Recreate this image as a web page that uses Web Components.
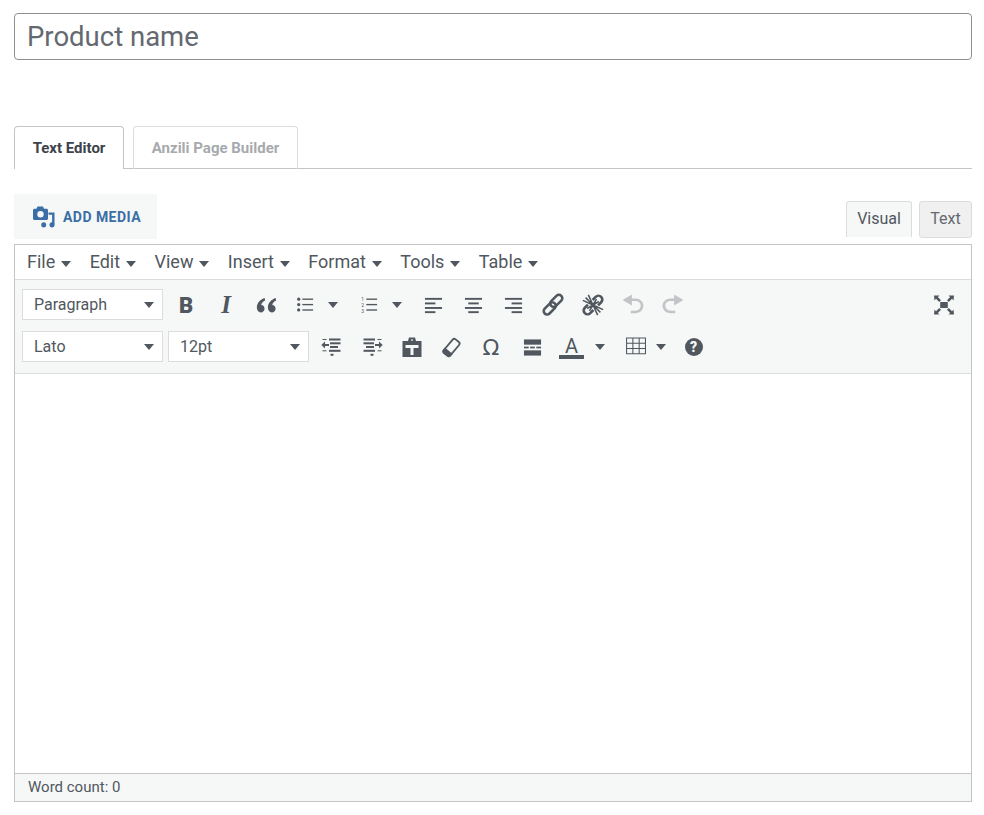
<!DOCTYPE html>
<html>
<head>
<meta charset="utf-8">
<style>
  html, body { margin: 0; background: #fff; }
  body { padding: 13px 12px 0 14px; font-family: Roboto, "Liberation Sans", sans-serif; color: #50575e; }
</style>
</head>
<body>
<product-title placeholder="Product name"></product-title>
<editor-tabs></editor-tabs>
<media-bar></media-bar>
<mce-editor></mce-editor>

<script>
const ICONS = {
  quote: '<path d="M8.400 3.500C4.800 4.700 1.600 7.600 1.600 11.800c0 2.600 1.500 4.200 3.400 4.200s3.300-1.400 3.300-3.200c0-1.900-1.300-3.100-2.900-3.200.3-1.700 1.500-3 3.400-3.900zM18 3.500c-3.600 1.200-6.800 4.100-6.800 8.300 0 2.600 1.500 4.200 3.400 4.200s3.300-1.400 3.300-3.200c0-1.900-1.300-3.100-2.900-3.200.3-1.700 1.500-3 3.400-3.900z"/>',
  bullist: '<circle cx="3" cy="3.500" r="1.800"/><circle cx="3" cy="9.500" r="1.800"/><circle cx="3" cy="15.500" r="1.800"/><rect x="7" y="2.800" width="12" height="1.500"/><rect x="7" y="8.800" width="12" height="1.500"/><rect x="7" y="14.800" width="12" height="1.500"/>',
  numlist: '<rect x="7" y="2.800" width="12" height="1.500"/><rect x="7" y="8.800" width="12" height="1.500"/><rect x="7" y="14.800" width="12" height="1.500"/><g font-family="Roboto" font-size="5.500"><text x="1.500" y="6">1</text><text x="1.500" y="12.500">2</text><text x="1.500" y="19">3</text></g>',
  alignleft: '<rect x="1" y="2" width="18" height="2"/><rect x="1" y="6.800" width="11" height="2"/><rect x="1" y="11.600" width="18" height="2"/><rect x="1" y="16" width="11" height="2"/>',
  aligncenter: '<rect x="1" y="2" width="18" height="2"/><rect x="4.500" y="6.800" width="11" height="2"/><rect x="1" y="11.600" width="18" height="2"/><rect x="4.500" y="16" width="11" height="2"/>',
  alignright: '<rect x="1" y="2" width="18" height="2"/><rect x="8" y="6.800" width="11" height="2"/><rect x="1" y="11.600" width="18" height="2"/><rect x="8" y="16" width="11" height="2"/>',
  link: '<g fill="none" stroke="currentColor" stroke-width="2.300"><rect x="10.200" y="-.6" width="6.200" height="13" rx="3.100" transform="rotate(45 13.300 5.900) translate(0 .5)"/><rect x="3.600" y="7" width="6.200" height="13" rx="3.100" transform="rotate(45 6.700 13.500) translate(0 -.5)"/></g>',
  unlink: '<g transform="rotate(45 10 10)" fill="none" stroke="currentColor"><path stroke-width="2.400" d="M6.500 7V3a3.500 3.500 0 0 1 7 0v4M6.500 13v4a3.500 3.500 0 0 0 7 0v-4"/><path stroke-width="1.400" d="M10 10L.5 6.500M10 10L.5 10M10 10L.5 13.500M10 10l9.500-3.500M10 10h9.500M10 10l9.500 3.500M10 10L8.500 4M10 10l1.500-6M10 10l-1.500 6M10 10l1.500 6"/></g>',
  undo: '<path d="M9 .5V4h3c4.500 0 7.500 3 7.500 6.500 0 4-3 7-7.500 7H8v-2.300h4c3 0 5-2 5-4.700 0-2.500-2-4.200-5-4.200H9v4.200L.5 5.500z"/>',
  redo: '<path transform="translate(20 0) scale(-1 1)" d="M9 .5V4h3c4.500 0 7.500 3 7.500 6.500 0 4-3 7-7.500 7H8v-2.300h4c3 0 5-2 5-4.700 0-2.500-2-4.200-5-4.200H9v4.200L.5 5.500z"/>',
  fullscreen: '<rect x="6.200" y="7" width="7.600" height="6"/><path d="M0 .5h5.500L3.900 2.100 7 5.200 5.200 7 2 3.800.5 5.500zM20 .5h-5.500l1.600 1.600L13 5.200 14.800 7 18 3.800l1.500 1.700zM0 19.500h5.500l-1.600-1.600L7 14.800 5.200 13 2 16.200.5 14.500zM20 19.500h-5.500l1.600-1.600-3.100-3.100 1.800-1.800 3.200 3.200 1.500-1.700z"/>',
  outdent: '<rect x="1.500" y="2" width="4" height="1"/><rect x="8" y="1.500" width="11.500" height="2"/><rect x="9" y="5.300" width="10.500" height="2"/><rect x="9" y="9" width="8" height="2"/><rect x="8" y="12.800" width="11.500" height="2"/><rect x="1.500" y="13.300" width="4" height="1"/><rect x="9.500" y="16.800" width="3" height="2"/><rect x="3.500" y="7" width="4.500" height="2"/><path d="M4 4.500L.3 8 4 11.500z"/>',
  indent: '<g transform="translate(20 0) scale(-1 1)"><rect x="1.500" y="2" width="4" height="1"/><rect x="8" y="1.500" width="11.500" height="2"/><rect x="9" y="5.300" width="10.500" height="2"/><rect x="9" y="9" width="8" height="2"/><rect x="8" y="12.800" width="11.500" height="2"/><rect x="1.500" y="13.300" width="4" height="1"/><rect x="9.500" y="16.800" width="3" height="2"/><rect x="3.500" y="7" width="4.500" height="2"/><path d="M4 4.500L.3 8 4 11.500z"/></g>',
  paste: '<path fill-rule="evenodd" d="M.5 4H6L7 .5h6L14 4h5.500v16H.5zM9.200 2.300v1.400h1.600V2.300zM3.500 8v3h5v7h3v-7h5V8z"/>',
  eraser: '<g transform="rotate(40 10 10)"><rect x="6" y="1.500" width="8" height="17" rx="2" fill="none" stroke="currentColor" stroke-width="1.700"/><path d="M5.200 14h9.600v2.500c0 1.700-1 2.800-2.800 2.800H8c-1.800 0-2.800-1.100-2.800-2.800z"/></g>',
  hr: '<rect x="1" y="1.500" width="18" height="5.500"/><rect x="1" y="13" width="18" height="5.500"/><rect x="1" y="9.100" width="5" height="1.800"/><rect x="7.500" y="9.100" width="5" height="1.800"/><rect x="14" y="9.100" width="5" height="1.800"/>',
  table: '<path d="M1 .5h19v16H1zM2 1.500v4h5v-4zm6 0v4h5v-4zm6 0v4h5v-4zM2 6.500v4h5v-4zm6 0v4h5v-4zm6 0v4h5v-4zM2 11.500v4h5v-4zm6 0v4h5v-4zm6 0v4h5v-4z" fill-rule="evenodd"/>',
  media: '<path fill-rule="evenodd" d="M4.500 .5h5.500l1 2.300h2.500c.8 0 1.500.7 1.500 1.500v8.200c0 .8-.7 1.500-1.500 1.500H1.500C.7 14 0 13.300 0 12.500V4.300c0-.8.7-1.500 1.500-1.500h2zM7.500 5a3.200 3.200 0 1 0 0 6.400 3.200 3.200 0 0 0 0-6.400z"/><path d="M15.500 6.500h6V18.500h-2.400V8.700h-3.600z"/><ellipse cx="10.700" cy="18.800" rx="2.500" ry="2.600"/><ellipse cx="19" cy="18.800" rx="2.500" ry="2.600"/>'
};

class ProductTitle extends HTMLElement {
  constructor(){
    super();
    this.attachShadow({ mode: "open" });
  }
  connectedCallback(){
    this.shadowRoot.innerHTML = `
      <style>
        :host { display: block; }
        .box {
          height: 45px;
          border: 1px solid #8c8f94;
          border-radius: 4px;
          padding: 0 12px;
          font-size: 27.5px;
          line-height: 45px;
          color: #646970;
        }
      </style>
      <div class="box">${this.getAttribute("placeholder")}</div>`;
  }
}
customElements.define("product-title", ProductTitle);

class EditorTabs extends HTMLElement {
  constructor(){
    super();
    this.attachShadow({ mode: "open" });
  }
  connectedCallback(){
    this.shadowRoot.innerHTML = `
      <style>
        :host { display: flex; gap: 9px; margin-top: 66px; height: 42px; border-bottom: 1px solid #c3c4c7; }
        div {
          box-sizing: border-box;
          height: 43px;
          padding-top: 13px;
          border: 1px solid #dcdcde;
          border-bottom: none;
          border-radius: 4px 4px 0 0;
          font-size: 15px;
          font-weight: 700;
          line-height: 17px;
          text-align: center;
          color: #a7aaad;
        }
        .on { width: 110px; color: #3c434a; border-color: #c3c4c7; background: #fff; position: relative; }
        .off { width: 165px; }
      </style>
      <div class="on">Text Editor</div>
      <div class="off">Anzili Page Builder</div>`;
  }
}
customElements.define("editor-tabs", EditorTabs);

class MediaBar extends HTMLElement {
  constructor(){
    super();
    this.attachShadow({ mode: "open" });
  }
  connectedCallback(){
    this.shadowRoot.innerHTML = `
      <style>
        :host { display: flex; justify-content: space-between; align-items: flex-end; margin-top: 25px; height: 50px; }
        .add {
          align-self: flex-start;
          display: flex;
          align-items: center;
          gap: 8px;
          box-sizing: border-box;
          width: 143px;
          height: 45px;
          padding-left: 19px;
          background: #f6f7f7;
          color: #3a6ea5;
          font-size: 14px;
          font-weight: 700;
          letter-spacing: .45px;
        }
        svg { width: 22px; height: 22px; fill: #3a6ea5; flex: none; margin-top: 1px; }
        .modes { display: flex; gap: 7px; align-items: flex-end; }
        .mode {
          box-sizing: border-box;
          height: 37px;
          padding-top: 7px;
          border: 1px solid #dcdcde;
          border-radius: 3px 3px 0 0;
          font-size: 16px;
          line-height: 19px;
          text-align: center;
          background: #f6f7f7;
          margin-bottom: 7px;
        }
        .visual { width: 66px; border-bottom: none; height: 36px; color: #50575e; margin-bottom: 7px; }
        .text { width: 53px; background: #f0f0f1; border-radius: 3px; color: #646970; margin-bottom: 6px; }
      </style>
      <div class="add"><svg viewBox="0 0 22 22">${ICONS.media}</svg><span>ADD MEDIA</span></div>
      <div class="modes">
        <div class="mode visual">Visual</div>
        <div class="mode text">Text</div>
      </div>`;
  }
}
customElements.define("media-bar", MediaBar);

class MceMenu extends HTMLElement {
  constructor(){
    super();
    this.attachShadow({ mode: "open" });
  }
  connectedCallback(){
    this.shadowRoot.innerHTML = `
      <style>
        :host { display: inline-flex; align-items: center; gap: 6px; font-size: 18px; line-height: 34px; color: #50575e; }
        i { width: 0; height: 0; margin-top: 3px; border: 5px solid transparent; border-top: 6px solid #50575e; border-bottom: none; }
      </style>
      <slot></slot><i></i>`;
  }
}
customElements.define("mce-menu", MceMenu);

class MceSelect extends HTMLElement {
  constructor(){
    super();
    this.attachShadow({ mode: "open" });
  }
  connectedCallback(){
    this.shadowRoot.innerHTML = `
      <style>
        :host {
          display: flex;
          align-items: center;
          justify-content: space-between;
          box-sizing: border-box;
          align-self: flex-start;
          width: 141px;
          height: 31px;
          padding: 0 8px 0 11px;
          background: #fff;
          border: 1px solid #dcdcde;
          font-size: 16px;
          color: #50575e;
        }
        i { width: 0; height: 0; border: 5px solid transparent; border-top: 6px solid #50575e; border-bottom: none; }
      </style>
      <span><slot></slot></span><i></i>`;
  }
}
customElements.define("mce-select", MceSelect);

// name = svg icon, no name = a text glyph in the slot
class MceIcon extends HTMLElement {
  constructor(){
    super();
    this.attachShadow({ mode: "open" });
  }
  connectedCallback(){
    const name = this.getAttribute("name");
    const arrow = this.hasAttribute("arrow");
    const size = this.getAttribute("size") || 20;
    const w = this.getAttribute("w") || 40;
    this.shadowRoot.innerHTML = `
      <style>
        :host {
          display: inline-flex;
          align-items: center;
          justify-content: center;
          gap: ${this.getAttribute("gap") || 14}px;
          flex: none;
          width: ${w}px;
          height: 32px;
          color: ${this.hasAttribute("off") ? "#c3c4c7" : "#50575e"};
        }
        svg { fill: currentColor; width: ${size}px; height: ${size}px; overflow: visible; }
        i { width: 0; height: 0; border: 5px solid transparent; border-top: 6px solid #50575e; border-bottom: none; }
      </style>
      ${name ? `<svg viewBox="0 0 20 20">${ICONS[name]}</svg>` : "<slot></slot>"}${arrow ? "<i></i>" : ""}`;
  }
}
customElements.define("mce-icon", MceIcon);

class MceColor extends HTMLElement {
  constructor(){
    super();
    this.attachShadow({ mode: "open" });
  }
  connectedCallback(){
    this.shadowRoot.innerHTML = `
      <style>
        :host { display: inline-flex; align-items: center; gap: 11px; flex: none; height: 32px; color: #50575e; }
        b { display: block; width: 25px; box-sizing: border-box; font-size: 20px; font-weight: 400; line-height: 16px; text-align: center; height: 21px; border-bottom: 4px solid #50575e; margin-top: 3px; }
        i { width: 0; height: 0; border: 5px solid transparent; border-top: 6px solid #50575e; border-bottom: none; }
      </style>
      <b>A</b><i></i>`;
  }
}
customElements.define("mce-color", MceColor);

class MceEditor extends HTMLElement {
  constructor(){
    super();
    this.attachShadow({ mode: "open" });
  }
  connectedCallback(){
    const menus = ["File","Edit","View","Insert","Format","Tools","Table"];
    this.shadowRoot.innerHTML = `
      <style>
        :host { display: flex; flex-direction: column; border: 1px solid #c3c4c7; height: 556px; }
        .menubar { display: flex; gap: 18.4px; height: 34px; padding-left: 12px; border-bottom: 1px solid #dcdcde; }
        .toolbar { background: #f6f7f7; height: 94px; box-sizing: border-box; border-bottom: 1px solid #dcdcde; padding: 9px 7px 0; display: flex; flex-direction: column; gap: 10px; }
        .row { display: flex; align-items: center; height: 32px; }
        .spacer { flex: 1; }
        .content { flex: 1; background: #fff; }
        .status { height: 27px; background: #f6f7f7; border-top: 1px solid #c3c4c7; padding-left: 13px; font-size: 15px; line-height: 27px; color: #50575e; }
        .b { font: 900 22px Roboto, sans-serif; }
        .it { font: italic 700 25px "Liberation Serif", serif; }
        .om { font: 400 22px "DejaVu Sans", sans-serif; }
        .qm { display: block; width: 18px; height: 18px; border-radius: 50%; background: #50575e; color: #f6f7f7; font: 900 14px/18px Roboto, sans-serif; text-align: center; }
      </style>
      <div class="menubar">${menus.map(m => `<mce-menu>${m}</mce-menu>`).join("")}</div>
      <div class="toolbar">
        <div class="row">
          <mce-select>Paragraph</mce-select>
          <mce-icon style="margin-left:3px"><span class="b">B</span></mce-icon>
          <mce-icon><span class="it">I</span></mce-icon>
          <mce-icon name="quote" size="23"></mce-icon>
          <mce-icon name="bullist" arrow w="62" size="18"></mce-icon>
          <mce-icon name="numlist" arrow w="62" size="18" style="margin-left:2px"></mce-icon>
          <mce-icon name="alignleft" size="19" style="margin-left:1px"></mce-icon>
          <mce-icon name="aligncenter" size="19"></mce-icon>
          <mce-icon name="alignright" size="19"></mce-icon>
          <mce-icon name="link" size="22"></mce-icon>
          <mce-icon name="unlink" size="22"></mce-icon>
          <mce-icon name="undo" off size="22"></mce-icon>
          <mce-icon name="redo" off size="22"></mce-icon>
          <span class="spacer"></span>
          <mce-icon name="fullscreen" size="20"></mce-icon>
        </div>
        <div class="row">
          <mce-select>Lato</mce-select>
          <mce-select style="margin-left:5px">12pt</mce-select>
          <mce-icon name="outdent" size="20" style="margin-left:2px"></mce-icon>
          <mce-icon name="indent" size="20" style="margin-left:2px"></mce-icon>
          <mce-icon name="paste" size="20" style="margin-left:-1px"></mce-icon>
          <mce-icon name="eraser" size="21" style="margin-left:-1px"></mce-icon>
          <mce-icon><span class="om">Ω</span></mce-icon>
          <mce-icon name="hr" size="19" style="margin-left:1px"></mce-icon>
          <mce-color style="margin-left:7px"></mce-color>
          <mce-icon name="table" size="21" w="62" gap="10" arrow style="margin-left:9px"></mce-icon>
          <mce-icon style="margin-left:-2.5px"><span class="qm">?</span></mce-icon>
        </div>
      </div>
      <div class="content"></div>
      <div class="status">Word count: 0</div>`;
  }
}
customElements.define("mce-editor", MceEditor);
</script>
</body>
</html>
